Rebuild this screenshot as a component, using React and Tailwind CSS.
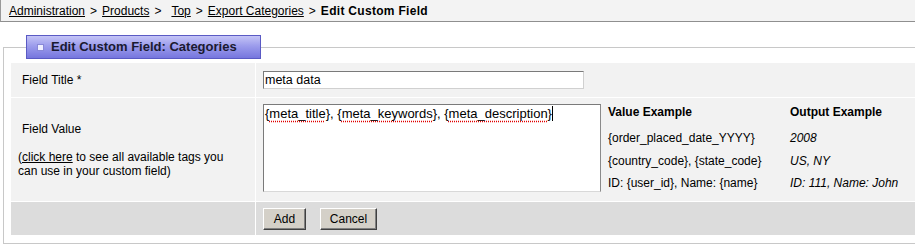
const Spell = ({ children }) => (
  <span className="underline decoration-dotted decoration-[#e00000] underline-offset-[3px]">{children}</span>
)

const Btn = ({ children, w }) => (
  <button
    className={`h-[22px] ${w} bg-[#d4d0c8] border border-t-white border-l-white border-r-[#404040] border-b-[#404040] shadow-[inset_-1px_-1px_0_#808080] text-[12px] text-black leading-none`}
  >
    {children}
  </button>
)

const examples = [
  ['{order_placed_date_YYYY}', '2008'],
  ['{country_code}, {state_code}', 'US, NY'],
  ['ID: {user_id}, Name: {name}', 'ID: 111, Name: John'],
]

export default function App() {
  return (
    <div className="w-[915px] h-[246px] overflow-hidden bg-white text-[12px] text-black font-['Liberation_Sans',Arial,sans-serif]">
      <div className="h-[22px] bg-[#f3f3f3] border-l border-l-[#999] border-b border-b-[#8f8f8f] pl-[8px] flex items-center">
        <a className="underline">Administration</a>
        <span className="mx-[5px]">&gt;</span>
        <a className="underline">Products</a>
        <span className="ml-[5px] mr-[10px]">&gt;</span>
        <a className="underline">Top</a>
        <span className="mx-[5px]">&gt;</span>
        <a className="underline">Export Categories</a>
        <span className="mx-[5px]">&gt;</span>
        <b className="tracking-[0.3px]">Edit Custom Field</b>
      </div>

      <fieldset className="mt-[13px] ml-[3px] w-[940px] border border-[#c8c8c8]">
        <legend className="ml-[22px] w-[235px] h-[24px] flex items-center border border-[#5a5ac4] bg-[linear-gradient(#c4c4f6,#9c9cec_45%,#7676de)]">
          <span className="ml-[10px] w-[7px] h-[7px] border border-[#8888d8] bg-[#eeeeff]"></span>
          <span className="ml-[7px] text-[13px] font-bold text-[#1a1a30]">Edit Custom Field: Categories</span>
        </legend>

        <div className="pl-[7px] pt-[4px] pb-[8px]">
          <div className="grid grid-cols-[244px_1fr] grid-rows-[34px_103px_33px] gap-px bg-white">
            <div className="bg-[#f2f2f2] flex items-center pl-[11px]">Field Title *</div>
            <div className="bg-[#f2f2f2] flex items-center pl-[7px]">
              <div className="w-[321px] h-[18px] bg-white border border-t-[#7a7a7a] border-l-[#7a7a7a] border-r-[#d0d0d0] border-b-[#d0d0d0] flex items-center pl-[1px] text-[12.5px]">
                meta data
              </div>
            </div>

            <div className="bg-[#f2f2f2] flex flex-col justify-center leading-[14px]">
              <div className="pl-[11px]">Field Value</div>
              <div className="h-[14px]"></div>
              <div className="pl-[7px]">
                (<a className="underline">click here</a> to see all available tags you
                <br />
                can use in your custom field)
              </div>
            </div>
            <div className="bg-[#f2f2f2] flex pl-[7px] pt-[6px]">
              <div className="w-[338px] h-[88px] bg-white border border-t-[#7a7a7a] border-l-[#7a7a7a] border-r-[#8a8a8a] border-b-[#d8d8d8] pl-[1px] pt-[1px] text-[13px] leading-[16px]">
                {'{'}<Spell>meta_title</Spell>{'}'}, {'{'}<Spell>meta_keywords</Spell>{'}'}, {'{'}<Spell>meta_description</Spell>{'}'}
                <span className="inline-block w-px h-[15px] bg-black align-[-3px]"></span>
              </div>
              <div className="ml-[7px] flex flex-col">
                <div className="flex h-[16px] items-center font-bold">
                  <div className="w-[182px]">Value Example</div>
                  <div>Output Example</div>
                </div>
                <div className="mt-[7px] flex flex-col">
                  {examples.map(([v, o], i) => (
                    <div key={i} className="flex h-[22.5px] items-center">
                      <div className="w-[182px]">{v}</div>
                      <div className="italic">{o}</div>
                    </div>
                  ))}
                </div>
              </div>
            </div>

            <div className="bg-[#dcdcdc]"></div>
            <div className="bg-[#dcdcdc] flex items-center pl-[7px] gap-[14px]">
              <Btn w="w-[43px]">Add</Btn>
              <Btn w="w-[57px]">Cancel</Btn>
            </div>
          </div>
        </div>
      </fieldset>
    </div>
  )
}
